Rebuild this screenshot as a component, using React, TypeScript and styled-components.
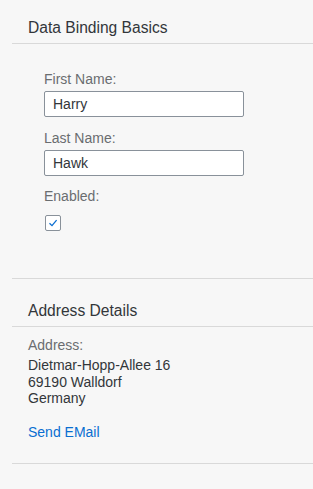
import React from "react";
import styled, { createGlobalStyle } from "styled-components";

const GlobalStyle = createGlobalStyle`
  html, body {
    margin: 0;
    padding: 0;
    background: #f7f7f7;
    font-family: "Liberation Sans", Arial, sans-serif;
    color: #32363a;
  }
`;

const Page = styled.div`
  padding-left: 12px;
  width: 301px;
`;

const Section = styled.section<{ $top: number }>`
  padding-top: ${(p) => p.$top}px;
  border-bottom: 1px solid #d9d9d9;
`;

const Header = styled.div`
  padding: 0 16px 5px;
  font-size: 15.6px;
  line-height: 20px;
  color: #32363a;
  border-bottom: 1px solid #d9d9d9;
`;

const Body = styled.div<{ $indent: number; $top: number; $bottom: number }>`
  display: flex;
  flex-direction: column;
  padding: ${(p) => p.$top}px 0 ${(p) => p.$bottom}px ${(p) => p.$indent}px;
`;

const Label = styled.label<{ $gap?: number }>`
  font-size: 14px;
  line-height: 16px;
  color: #6a6d70;
  margin-top: ${(p) => p.$gap ?? 0}px;
  margin-bottom: 4px;
`;

const Input = styled.input`
  box-sizing: border-box;
  width: 200px;
  height: 26px;
  padding: 0 8px;
  border: 1px solid #89919a;
  border-radius: 2px;
  background: #fff;
  font-family: inherit;
  font-size: 14px;
  color: #32363a;
  outline: none;
`;

const CheckBox = styled.span`
  box-sizing: border-box;
  display: flex;
  align-items: center;
  justify-content: center;
  width: 16px;
  height: 16px;
  margin: 7px 0 0 1px;
  border: 1px solid #89919a;
  border-radius: 2px;
  background: #fff;
`;

const Text = styled.div`
  font-size: 14px;
  line-height: 16.5px;
  color: #32363a;
`;

const Link = styled.a`
  margin-top: 17px;
  font-size: 14px;
  line-height: 16px;
  color: #0a6ed1;
  text-decoration: none;
`;

export default function App() {
  return (
    <Page>
      <GlobalStyle />
      <Section $top={18}>
        <Header>Data Binding Basics</Header>
        <Body $indent={32} $top={27} $bottom={47}>
          <Label>First Name:</Label>
          <Input defaultValue="Harry" />
          <Label $gap={13}>Last Name:</Label>
          <Input defaultValue="Hawk" />
          <Label $gap={12}>Enabled:</Label>
          <CheckBox>
            <svg width="10" height="10" viewBox="0 0 10 10">
              <path d="M1.5 5.2 L4 7.6 L8.6 2.2" fill="none" stroke="#0a6ed1" strokeWidth="1.3" />
            </svg>
          </CheckBox>
        </Body>
      </Section>
      <Section $top={22}>
        <Header>Address Details</Header>
        <Body $indent={16} $top={10} $bottom={23}>
          <Label>Address:</Label>
          <Text>Dietmar-Hopp-Allee 16</Text>
          <Text>69190 Walldorf</Text>
          <Text>Germany</Text>
          <Link href="#">Send EMail</Link>
        </Body>
      </Section>
    </Page>
  );
}
